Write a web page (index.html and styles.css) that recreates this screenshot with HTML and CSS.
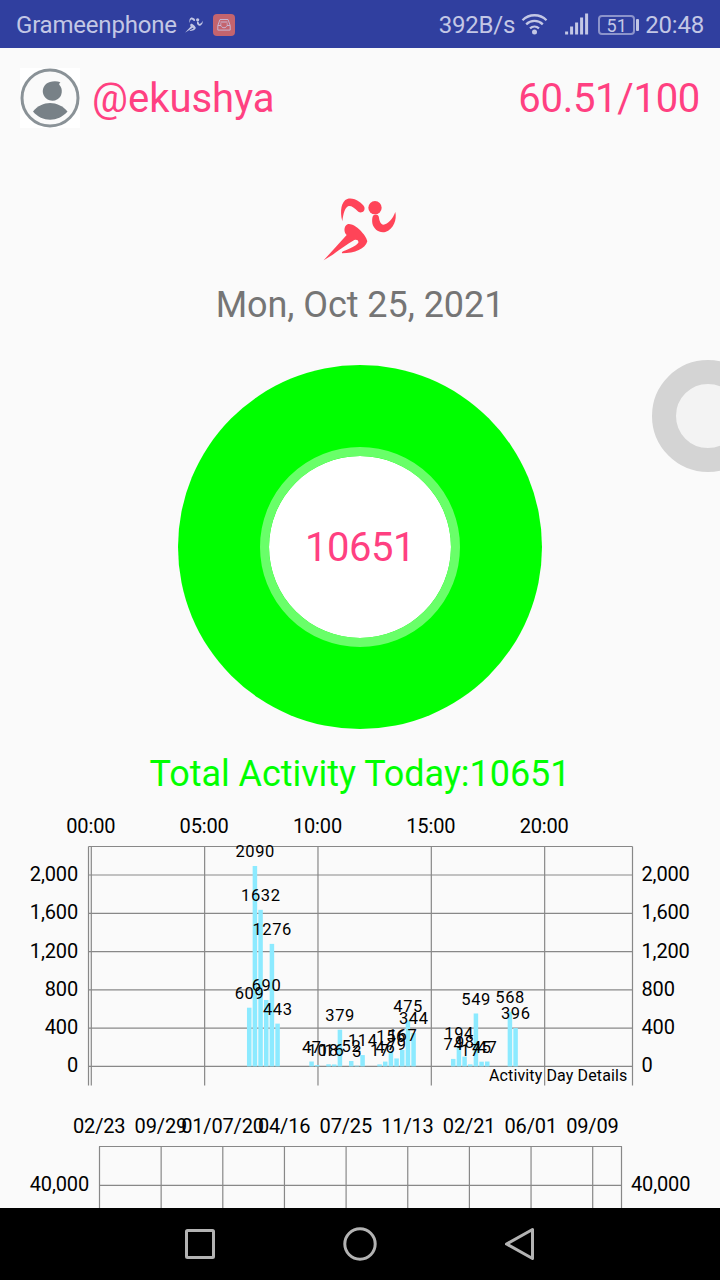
FILE: index.html
```html
<!DOCTYPE html>
<html lang="en">
<head>
    <meta charset="UTF-8">
    <meta name="viewport" content="width=device-width, initial-scale=1.0">
    <title>Activity</title>
    <link rel="stylesheet" href="styles.css">
</head>
<body>
    <!-- Status bar -->
    <div class="status-bar">
        <span class="carrier">Grameenphone</span>
        <svg class="status-runner" viewBox="70 50 222 192">
            <use href="#runner"/>
        </svg>
        <svg class="status-app" width="22" height="22" viewBox="0 0 22 22">
            <rect width="22" height="22" rx="4" fill="#c4646e"/>
            <path d="M7 5.5h8l2.2 6v4.6H4.8v-4.6zM5 11.5h3c.5 3 5.5 3 6 0h3M7.5 8h7M7 10h1.5M13.5 10H15" fill="none" stroke="#c9b5d2" stroke-width="1"/>
        </svg>
        <span class="speed">392B/s</span>
        <svg class="wifi" width="28" height="24" viewBox="0 0 28 24">
            <g fill="none" stroke="#c3c7e5" stroke-width="2.3">
                <path d="M1.500 8.200a17 17 0 0 1 24 0"/>
                <path d="M5.200 12.300a12 12 0 0 1 16.600 0"/>
                <path d="M9 16.300a6.800 6.800 0 0 1 9 0"/>
            </g>
            <circle cx="13.5" cy="20" r="2.5" fill="#c3c7e5"/>
        </svg>
        <svg class="signal" width="24" height="24" viewBox="0 0 24 24">
            <path d="M1.600 22.500v-3M6.600 22.500v-8M11.600 22.500v-12M16.600 22.500v-17M21.600 22.500v-21" stroke="#c3c7e5" stroke-width="3"/>
        </svg>
        <span class="battery">51</span>
        <span class="clock">20:48</span>
    </div>

    <!-- Main screen -->
    <div class="screen">
        <div class="header">
            <svg class="avatar" width="60" height="60" viewBox="0 0 60 60">
                <rect width="60" height="60" fill="#fff"/>
                <circle cx="30" cy="30" r="28" fill="#fafafa" stroke="#8a9297" stroke-width="3"/>
                <path d="M30 14c3-.8 7-1 10.500.3-1 .8-1.500 1.500-1.200 2.500A9.500 9.500 0 1 1 30 14z" fill="#788187"/>
                <path d="M13 43.500c9-11.500 25-11.500 34.500 0-9.500 11-25.500 11-34.500 0z" fill="#788187"/>
            </svg>
            <span class="username">@ekushya</span>
            <span class="score">60.51/100</span>
        </div>

        <svg class="logo" viewBox="70 50 222 192">
            <g id="runner">
                <path d="M128 123C120 92 125 62 143 56C163 50 188 68 194 80C198 94 184 100 176 94C164 82 155 76 147 77C135 82 131 100 128 123z"/>
                <circle cx="226" cy="82" r="20"/>
                <path d="M220 106C227 99 237 102 238 112C239 122 244 132 251 133C265 132 279 116 287 95C292 118 282 147 257 155C238 159 222 147 218 129C217 120 217 113 220 106z"/>
                <path d="M72 240L141 164C132 157 131 136 145 131C164 127 200 163 203 183C198 205 165 219 127 219C126 216 128 214 132 212C150 205 168 197 176 187C177 180 172 177 164 179C143 191 120 208 99 223z"/>
            </g>
        </svg>

        <div class="date">Mon, Oct 25, 2021</div>

        <div class="ring">
            <div class="ring-center">10651</div>
        </div>

        <div class="total">Total Activity Today:10651</div>

        <svg class="chart" id="day-chart" width="720" height="290" viewBox="0 800 720 290"></svg>
        <svg class="chart" id="history-chart" width="720" height="118" viewBox="0 1090 720 118"></svg>
    </div>

    <!-- Floating assistive button, half hidden behind the edge -->
    <div class="floating-dock">
        <div class="floating-button"></div>
    </div>

    <!-- Navigation bar -->
    <div class="nav-bar">
        <svg width="34" height="34" viewBox="0 0 34 34"><rect x="3.5" y="3.5" width="27" height="27" rx="1"/></svg>
        <svg width="34" height="34" viewBox="0 0 34 34"><circle cx="17" cy="17" r="15.2"/></svg>
        <svg width="34" height="34" viewBox="0 0 34 34"><path d="M29.500 2.500v29L3.500 17z"/></svg>
    </div>

    <script>
        // [quarter hour of the day, steps]
        const steps = [
            [28, 609], [29, 2090], [30, 1632], [31, 690], [32, 1276], [33, 443],
            [39, 47], [40, 10], [42, 18], [43, 16], [44, 379], [46, 52], [47, 3], [48, 114],
            [51, 17], [52, 46], [53, 156], [54, 79], [55, 167], [56, 475], [57, 344],
            [64, 74], [65, 194], [66, 98], [67, 17], [68, 549], [69, 45], [70, 47],
            [74, 568], [75, 396]
        ];

        function line(x1, y1, x2, y2) {
            return `<line x1="${x1}" y1="${y1}" x2="${x2}" y2="${y2}"/>`;
        }

        function text(cls, x, y, value) {
            return `<text class="${cls}" x="${x}" y="${y}">${value}</text>`;
        }

        function drawDayChart() {
            const zero = 1066.4;
            const scale = 0.0957;
            const first = 91.3;
            const slot = 5.667;
            let out = '';

            for (let i = 0; i < 5; i++) {
                const x = first + i * slot * 20;
                out += line(x, 846.5, x, 1085.5);
                out += text('axis middle', x - 0.5, 833.3, String(i * 5).padStart(2, '0') + ':00');
            }
            for (let v = 0; v <= 2000; v += 400) {
                const y = zero - v * scale;
                out += line(88.5, y, 632.5, y);
                out += text('axis end', 78, y + 6, v.toLocaleString('en-US'));
                out += text('axis', 641.5, y + 6, v.toLocaleString('en-US'));
            }
            out += line(88.5, 846.5, 632.5, 846.5);
            out += line(88.5, 846.5, 88.5, 1085.5) + line(632.5, 846.5, 632.5, 1085.5);

            // bars first, labels stay on top
            for (const [i, v] of steps) {
                const h = v * scale + 0.4;
                out += `<rect class="bar" x="${first + i * slot - 3}" y="${zero - h}" width="4.5" height="${h}"/>`;
            }
            for (const [i, v] of steps) {
                out += text('value', first + i * slot - 0.5, zero - v * scale - 9.1, v);
            }
            out += text('caption', 627.5, 1081, 'Activity Day Details');
            document.getElementById('day-chart').innerHTML = out;
        }

        function drawHistoryChart() {
            const dates = ['02/23', '09/29', '01/07/20', '04/16', '07/25', '11/13', '02/21', '06/01', '09/09'];
            let out = '';
            dates.forEach(function(date, i) {
                const x = 99.5 + i * 61.65;
                out += line(x, 1146.5, x, 1208);
                out += text('axis middle', x - 0.3, 1133.3, date);
            });
            out += line(621.5, 1146.5, 621.5, 1208);
            out += line(99, 1146.5, 622, 1146.5) + line(99, 1185.3, 622, 1185.3);
            out += text('axis end', 89, 1191.3, '40,000') + text('axis', 631, 1191.3, '40,000');
            document.getElementById('history-chart').innerHTML = out;
        }

        drawDayChart();
        drawHistoryChart();
    </script>
</body>
</html>
```
FILE: styles.css
```css
body {
    display: flex;
    flex-direction: column;
    width: 720px;
    height: 1280px;
    margin: 0;
    overflow: hidden;
    font-family: Roboto, sans-serif;
    background-color: #fafafa;
}
svg {
    display: block;
    flex: none;
}
.status-bar {
    display: flex;
    align-items: center;
    height: 48px;
    padding: 0 16px;
    box-sizing: border-box;
    font-size: 24px;
    line-height: 48px;
    color: #c3c7e5;
    background-color: #303f9f;
}
.carrier,
.speed,
.clock {
    padding-top: 2px;
    letter-spacing: -0.2px;
}
.carrier {
    width: 163px;
}
.status-runner {
    width: 18px;
    height: 16px;
    margin-left: 6px;
    margin-top: 2px;
    fill: #c3c7e5;
}
.status-app {
    margin-left: 10px;
    margin-top: 2px;
}
.speed {
    margin-left: auto;
}
.wifi {
    margin-left: 6px;
}
.signal {
    margin-left: 16px;
}
.battery {
    position: relative;
    width: 33px;
    height: 16px;
    margin-left: 9px;
    margin-top: 2px;
    border: 2px solid #8c94cb;
    border-radius: 4px;
    font-size: 18px;
    line-height: 17px;
    text-align: center;
}
.battery::after {
    content: "";
    position: absolute;
    top: 2px;
    right: -6px;
    width: 3px;
    height: 12px;
    border-radius: 1px;
    background-color: #c3c7e5;
}
.clock {
    margin-left: 10px;
}
.screen {
    display: flex;
    flex-direction: column;
    align-items: center;
    height: 1160px;
    overflow: hidden;
}
.header {
    display: flex;
    align-items: center;
    width: 680px;
    height: 60px;
    margin-top: 20px;
    font-size: 40px;
    color: #ff4081;
}
.username {
    margin-left: 12px;
}
.score {
    margin-left: auto;
    letter-spacing: -0.3px;
}
.logo {
    width: 74px;
    height: 64px;
    margin-top: 69px;
    fill: #ff4458;
}
.date {
    height: 48px;
    margin-top: 20px;
    font-size: 36px;
    line-height: 48px;
    letter-spacing: -0.05px;
    color: #757575;
}
.ring {
    display: flex;
    align-items: center;
    justify-content: center;
    width: 364px;
    height: 364px;
    margin-top: 36px;
    border-radius: 50%;
    background-color: #00ff00;
}
.ring-center {
    width: 182px;
    height: 182px;
    border: 9px solid #69ff69;
    border-radius: 50%;
    font-size: 40px;
    line-height: 184px;
    letter-spacing: -0.5px;
    text-align: center;
    color: #ff4081;
    background-color: #fff;
    background-clip: padding-box;
}
.total {
    height: 48px;
    margin-top: 20px;
    font-size: 36px;
    line-height: 50px;
    letter-spacing: -0.05px;
    color: #00ff00;
}
#day-chart {
    margin-top: 3px;
}
.chart line {
    stroke: #888;
    stroke-width: 1.2;
}
.bar {
    fill: #8ceaff;
}
.axis {
    font-size: 20px;
    letter-spacing: -0.15px;
}
.middle {
    text-anchor: middle;
}
.end {
    text-anchor: end;
}
.value {
    font-size: 16.5px;
    letter-spacing: 0.6px;
    text-anchor: middle;
}
.caption {
    font-size: 16px;
    letter-spacing: 0.13px;
    text-anchor: end;
}
.floating-dock {
    position: absolute;
    top: 360px;
    right: 0;
    width: 68px;
    height: 112px;
    overflow: hidden;
}
.floating-button {
    width: 64px;
    height: 64px;
    border: 24px solid #d4d4d4;
    border-radius: 50%;
    background-color: #f3f3f3;
}
.nav-bar {
    display: flex;
    align-items: center;
    justify-content: center;
    gap: 126px;
    height: 72px;
    background-color: #000;
}
.nav-bar svg {
    fill: none;
    stroke: #b3b3b3;
    stroke-width: 3;
    stroke-linejoin: round;
}
```
